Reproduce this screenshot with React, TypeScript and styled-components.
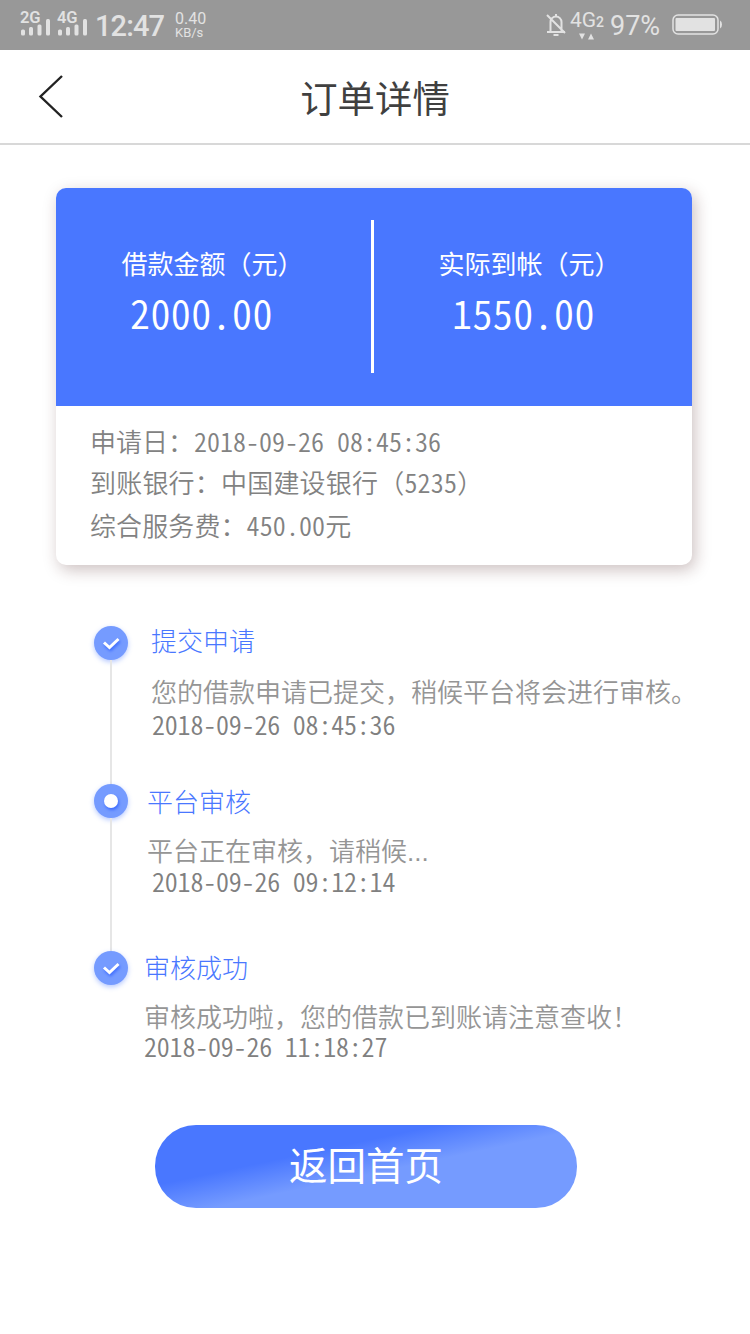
import React from "react";
import styled, { createGlobalStyle } from "styled-components";

const GlobalStyle = createGlobalStyle`
  * { box-sizing: border-box; }
  body {
    margin: 0;
    background: #fff;
    font-family: "Noto Sans CJK SC", sans-serif;
    text-spacing-trim: space-all;
  }
`;

const Page = styled.main`
  width: 750px;
  height: 1334px;
  display: flex;
  flex-direction: column;
  overflow: hidden;
  background: #fff;
`;

const StatusBar = styled.div`
  flex: none;
  height: 50px;
  display: flex;
  justify-content: space-between;
  padding: 0 28px 0 20px;
  background: #989898;
  color: #e2e2e2;
  font-family: Roboto, sans-serif;
`;

const StatusGroup = styled.div`
  display: flex;
  align-items: flex-start;
`;

const Signal = styled.div`
  width: 37px;
  padding-top: 10px;
  font-size: 16.5px;
  font-weight: 600;
  line-height: 16px;
  letter-spacing: -0.3px;
  svg { display: block; margin-top: -7px; }
`;

const Clock = styled.div`
  width: 81px;
  padding: 10px 0 0 1px;
  font-size: 29px;
  line-height: 32px;
  font-weight: 500;
  letter-spacing: -0.9px;
`;

const Speed = styled.div`
  padding-top: 12px;
  font-size: 16px;
  line-height: 14px;
  small { display: block; font-size: 13px; }
`;

const Network = styled.div`
  width: 44px;
  padding: 10px 0 0 4px;
  font-size: 21px;
  line-height: 21px;
  white-space: nowrap;
  small { font-size: 14px; font-weight: 500; }
  svg { display: block; margin: 0 0 0 9px; }
`;

const BellIcon = styled.svg`
  display: block;
  margin-top: 13px;
`;

const Percent = styled.div`
  width: 62px;
  padding-top: 10px;
  font-size: 27px;
  line-height: 32px;
`;

const BatteryIcon = styled.svg`
  display: block;
  margin-top: 14px;
`;

const NavBar = styled.header`
  flex: none;
  height: 95px;
  display: grid;
  grid-template-columns: 150px 1fr 150px;
  border-bottom: 2px solid #d8d8d8;
`;

const BackButton = styled.button`
  align-self: start;
  border: 0;
  padding: 22px 0 0 36px;
  background: none;
  text-align: left;
  svg { display: block; }
`;

const NavTitle = styled.h1`
  margin: 0;
  padding: 20px 0 0;
  text-align: center;
  color: #404040;
  font-size: 37.4px;
  line-height: 54px;
  font-weight: 400;
`;

const Card = styled.section`
  flex: none;
  width: 636px;
  height: 377px;
  margin: 43px 0 0 56px;
  border-radius: 10px;
  background: #fff;
  overflow: hidden;
  box-shadow: 3px 5px 16px rgba(70, 25, 25, 0.27);
`;

const Summary = styled.div`
  height: 218px;
  display: flex;
  align-items: flex-start;
  padding-top: 32px;
  background: #4977ff;
  color: #fff;
`;

const Divider = styled.div`
  width: 3px;
  height: 153px;
  background: #fff;
`;

const Amount = styled.div<{ $width: number; $label: number; $value: number }>`
  width: ${(p) => p.$width}px;
  padding-top: 24px;
  white-space: nowrap;
  span {
    display: block;
    padding-left: ${(p) => p.$label}px;
    font-size: 26px;
    line-height: 38px;
  }
  strong {
    display: block;
    padding-left: ${(p) => p.$value}px;
    font-size: 40px;
    line-height: 60px;
    font-weight: 350;
    letter-spacing: 0.4px;
    font-feature-settings: "hwid";
  }
`;

const Details = styled.div`
  padding: 16px 0 0 34px;
  color: #828282;
`;

const DetailRow = styled.div<{ $height: number; $spacing?: number }>`
  height: ${(p) => p.$height}px;
  font-size: 26px;
  font-weight: 350;
  line-height: 38px;
  letter-spacing: ${(p) => p.$spacing ?? 0}px;
  white-space: pre;
  b {
    font-weight: inherit;
    font-feature-settings: "hwid";
  }
`;

const Timeline = styled.ol`
  flex: none;
  height: 499px;
  margin: 0;
  padding: 61px 0 0 94px;
  list-style: none;
`;

const Step = styled.li<{ $height: number }>`
  display: flex;
  height: ${(p) => p.$height}px;
`;

const Rail = styled.div`
  flex: none;
  width: 34px;
  display: flex;
  flex-direction: column;
  align-items: center;
`;

const Dot = styled.div`
  flex: none;
  width: 34px;
  height: 34px;
  border-radius: 50%;
  background: #759bff;
  box-shadow: 0 2px 5px rgba(73, 119, 255, 0.4);
  svg {
    display: block;
    filter: drop-shadow(1px 2px 1.5px rgba(40, 90, 255, 0.75));
  }
`;

const Connector = styled.div`
  flex: 1;
  width: 2px;
  background: #e6e6e6;
`;

const StepBody = styled.div<{ $left: number; $lift: number }>`
  margin-top: ${(p) => p.$lift}px;
  padding-left: ${(p) => p.$left}px;
  white-space: nowrap;
`;

const StepTitle = styled.h2`
  margin: 0;
  color: #4977ff;
  font-size: 26px;
  line-height: 38px;
  font-weight: 300;
`;

const StepText = styled.p<{ $top: number }>`
  margin: ${(p) => p.$top}px 0 0;
  color: #959595;
  font-family: "Liberation Sans", "Noto Sans CJK SC", sans-serif;
  font-size: 26px;
  line-height: 34px;
  font-weight: 350;
`;

const StepTime = styled.time<{ $top: number; $left: number }>`
  display: block;
  margin: ${(p) => p.$top}px 0 0 ${(p) => p.$left}px;
  color: #808080;
  font-size: 26px;
  line-height: 30px;
  letter-spacing: -0.2px;
  font-weight: 350;
  font-feature-settings: "hwid";
`;

const HomeButton = styled.button`
  flex: none;
  width: 422px;
  height: 83px;
  margin: 61px 0 0 155px;
  padding: 0 0 7px;
  border: 0;
  border-radius: 41px;
  background: linear-gradient(168deg, #4977ff 35%, #759bff 55%);
  color: #fff;
  font-family: inherit;
  font-size: 38.5px;
  line-height: 56px;
`;

function SignalBars() {
  return (
    <svg width="31" height="18" fill="#e2e2e2">
      <rect x="1" y="10.500" width="4" height="6" rx="1.500" />
      <rect x="9" y="8" width="4" height="8.500" rx="1.500" />
      <rect x="17.500" y="5.500" width="4" height="11" rx="1.500" />
      <rect x="26" y="0" width="4" height="16.500" rx="1.500" />
    </svg>
  );
}

function StepDot({ done }: { done: boolean }) {
  return (
    <Dot>
      <svg width="34" height="34">
        {done ? (
          <path d="M10 16.500 L15.500 21.500 L24.500 13" fill="none" stroke="#fff" strokeWidth="3" />
        ) : (
          <circle cx="17" cy="17" r="7" fill="#fff" />
        )}
      </svg>
    </Dot>
  );
}

const steps = [
  {
    title: "提交申请", text: "您的借款申请已提交，稍候平台将会进行审核。", time: "2018-09-26 08:45:36",
    done: true, height: 158, left: 23, lift: -5, textTop: 17, timeTop: -1, timeLeft: 1,
  },
  {
    title: "平台审核", text: "平台正在审核，请稍候...", time: "2018-09-26 09:12:14",
    done: false, height: 167, left: 19, lift: -2, textTop: 15, timeTop: -3, timeLeft: 5,
  },
  {
    title: "审核成功", text: "审核成功啦，您的借款已到账请注意查收！", time: "2018-09-26 11:18:27",
    done: true, height: 113, left: 16, lift: -3, textTop: 15, timeTop: -4, timeLeft: 0,
  },
];

export default function App() {
  return (
    <Page>
      <GlobalStyle />
      <StatusBar>
        <StatusGroup>
          <Signal>2G<SignalBars /></Signal>
          <Signal>4G<SignalBars /></Signal>
          <Clock>12:47</Clock>
          <Speed>0.40<small>KB/s</small></Speed>
        </StatusGroup>
        <StatusGroup>
          <BellIcon width="20" height="24" fill="none" stroke="#e2e2e2" strokeWidth="2">
            <path d="M4.500 18V9a5.500 5.500 0 0 1 11 0v9M1 19h18M1 2l18 18M7.500 22h5M10 1v2" />
          </BellIcon>
          <Network>
            4G<small>2</small>
            <svg width="18" height="7" fill="#e2e2e2"><path d="M0 0.500h6l-3 6zM9 6.500h6l-3-6z" /></svg>
          </Network>
          <Percent>97%</Percent>
          <BatteryIcon width="50" height="21">
            <rect x="1" y="1" width="45" height="19" rx="5" fill="none" stroke="#e2e2e2" strokeWidth="1.500" />
            <rect x="3.500" y="4" width="39.500" height="13" rx="1" fill="#e2e2e2" />
            <path d="M48 6.500q2 1 2 4t-2 4z" fill="#e2e2e2" />
          </BatteryIcon>
        </StatusGroup>
      </StatusBar>
      <NavBar>
        <BackButton aria-label="返回">
          <svg width="30" height="50" fill="none" stroke="#222" strokeWidth="2.400">
            <path d="M26 4L4.500 24.500L26 45" />
          </svg>
        </BackButton>
        <NavTitle>订单详情</NavTitle>
      </NavBar>
      <Card>
        <Summary>
          <Amount $width={315} $label={65.5} $value={74}>
            <span>借款金额（元）</span>
            <strong>2000.00</strong>
          </Amount>
          <Divider />
          <Amount $width={318} $label={64.5} $value={78}>
            <span>实际到帐（元）</span>
            <strong>1550.00</strong>
          </Amount>
        </Summary>
        <Details>
          <DetailRow $height={41}>申请日：<b>2018-09-26 08:45:36</b></DetailRow>
          <DetailRow $height={43} $spacing={0.2}>到账银行：中国建设银行（<b>5235</b>）</DetailRow>
          <DetailRow $height={38} $spacing={0.1}>综合服务费：<b>450.00</b>元</DetailRow>
        </Details>
      </Card>
      <Timeline>
        {steps.map((s, i) => (
          <Step key={s.title} $height={s.height}>
            <Rail>
              <StepDot done={s.done} />
              {i < steps.length - 1 && <Connector />}
            </Rail>
            <StepBody $left={s.left} $lift={s.lift}>
              <StepTitle>{s.title}</StepTitle>
              <StepText $top={s.textTop}>{s.text}</StepText>
              <StepTime $top={s.timeTop} $left={s.timeLeft}>{s.time}</StepTime>
            </StepBody>
          </Step>
        ))}
      </Timeline>
      <HomeButton>返回首页</HomeButton>
    </Page>
  );
}
